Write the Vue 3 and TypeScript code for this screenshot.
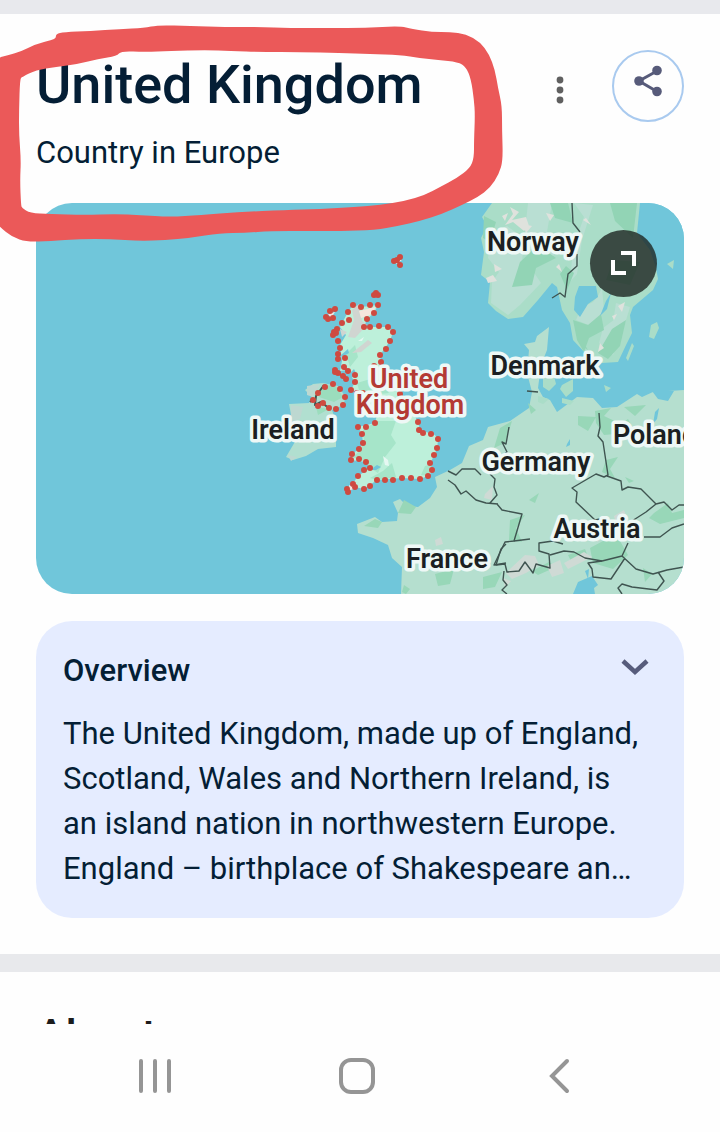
<script setup lang="ts">
import { ref } from 'vue'

type Point = [number, number]

interface Label {
  text: string
  x: number
  y: number
  accent?: boolean
}

const open = ref(false)

const labels: Label[] = [
  { text: 'Norway', x: 533, y: 251 },
  { text: 'Denmark', x: 545, y: 375 },
  { text: 'Ireland', x: 293, y: 439 },
  { text: 'Germany', x: 536, y: 471 },
  { text: 'Poland', x: 655, y: 444 },
  { text: 'Austria', x: 597, y: 538 },
  { text: 'France', x: 447, y: 568 },
  { text: 'United', x: 409, y: 388, accent: true },
  { text: 'Kingdom', x: 410, y: 414, accent: true },
]

const borderDots: Point[] = [
  [348, 312], [353, 305], [361, 307], [370, 305], [378, 305], [374, 313], [367, 319],
  [364, 327], [370, 327], [379, 326], [388, 327], [393, 332], [390, 341], [386, 349],
  [380, 355], [381, 362], [374, 366], [400, 394], [418, 422], [419, 430], [423, 433],
  [431, 434], [438, 439], [437, 448], [434, 455], [430, 463], [432, 470], [428, 476],
  [420, 479], [411, 478], [402, 478], [393, 480], [385, 480], [377, 480], [370, 486],
  [364, 489], [355, 487], [348, 492], [347, 489], [353, 484], [358, 476], [364, 470],
  [370, 468], [366, 462], [359, 459], [351, 460], [352, 454], [359, 449], [363, 443],
  [362, 434], [358, 427], [366, 427], [375, 423], [363, 393], [357, 393], [351, 390],
  [355, 382], [355, 375], [348, 371], [344, 367], [345, 358], [338, 359], [338, 354],
  [340, 348], [338, 341], [336, 333], [334, 332], [337, 329], [333, 335], [342, 323],
  [349, 320], [335, 309], [330, 311], [328, 319], [326, 317], [333, 318], [335, 370],
  [338, 373], [343, 376], [346, 379], [335, 372], [325, 387], [333, 384], [340, 389],
  [345, 397], [343, 405], [336, 409], [329, 408], [323, 403], [318, 406], [313, 400],
  [318, 393], [374, 295], [378, 295], [376, 293], [400, 257], [394, 261], [400, 265],
  [397, 260],
]

const markerOuter: Point[] = [
  [-6, 59], [8, 55], [20, 52], [36, 44], [52, 40], [56, 38], [56, 34], [64, 32], [90, 31],
  [120, 29], [144, 28], [158, 25], [190, 26], [225, 27], [258, 27], [290, 28], [330, 28],
  [365, 28], [400, 26], [412, 29], [432, 32], [450, 32], [466, 34], [480, 42], [489, 54],
  [495, 70], [498, 88], [502, 106], [502, 130], [503, 160], [499, 174], [490, 188],
  [478, 197], [462, 205], [442, 214], [420, 221], [398, 226], [375, 230], [340, 231],
  [310, 231], [270, 231], [245, 233], [220, 233], [190, 238], [165, 240], [140, 241],
  [110, 239], [80, 239], [50, 241], [27, 242], [12, 237], [0, 227], [-8, 218],
]

const markerInner: Point[] = [
  [20, 79], [22, 77], [36, 70], [56, 67], [78, 64], [98, 59], [117, 56], [121, 51],
  [145, 52], [170, 51], [206, 50], [230, 51], [262, 52], [300, 52], [340, 53], [370, 54],
  [400, 55], [420, 58], [438, 60], [458, 62], [466, 67], [471, 79], [474, 100], [475, 115],
  [474, 140], [474, 158], [470, 168], [457, 178], [440, 187], [425, 195], [405, 201],
  [380, 205], [355, 207], [320, 209], [285, 210], [240, 212], [200, 215], [170, 217],
  [140, 215], [115, 214], [85, 215], [50, 214], [30, 213], [22, 208], [21, 205], [20, 180],
  [21, 160], [19, 135], [19, 110],
]

/** Closed curve through the midpoints of a list of points. */
function smooth(points: Point[]): string {
  const mid = (a: Point, b: Point) => `${(a[0] + b[0]) / 2} ${(a[1] + b[1]) / 2}`
  const last = points[points.length - 1]
  const curves = points.map((point, i) => {
    const next = points[(i + 1) % points.length]
    return `Q${point[0]} ${point[1]} ${mid(point, next)}`
  })
  return `M${mid(last, points[0])}${curves.join('')}Z`
}

const markerPath = smooth(markerOuter) + smooth(markerInner)
const dotPath = borderDots.map(([x, y]) => `M${x} ${y}h0`).join('')
</script>

<template>
  <div class="screen">
    <main class="content">
      <section class="panel">
        <header class="heading">
          <div class="names">
            <h1>United Kingdom</h1>
            <p>Country in Europe</p>
          </div>
          <button class="more" type="button" aria-label="More options">
            <svg width="8" height="28" viewBox="0 0 8 28" fill="#606060">
              <circle cx="4" cy="4" r="3.4" />
              <circle cx="4" cy="14" r="3.4" />
              <circle cx="4" cy="24" r="3.4" />
            </svg>
          </button>
          <button class="share" type="button" aria-label="Share">
            <svg width="30" height="32" viewBox="0 0 30 32">
              <path d="M24 6 6 16l18 10.500" fill="none" stroke="#575b7a" stroke-width="3" />
              <g fill="#575b7a">
                <circle cx="24" cy="5.500" r="4.800" />
                <circle cx="6" cy="16" r="4.800" />
                <circle cx="24" cy="26.500" r="4.800" />
              </g>
            </svg>
          </button>
        </header>

        <div class="map">
          <svg class="chart" viewBox="36 203 648 391" role="img" aria-label="Map of north-western Europe">
            <rect x="36" y="203" width="648" height="391" fill="#70c6da" />

            <!-- Norway and Sweden -->
            <path
              fill="#aaddc8"
              d="M492 203 482 217 487 226 481 238 484 252 481 275 490 282 488 303 496 311 508 319 523 317 538 300 552 283 557 287 562 310 570 323 573 340 587 355 602 363 618 362 627 343 632 333 630 315 633 307 653 290 658 279 656 268 650 250 637 233 640 203Z"
            />
            <g fill="#b9dfd3">
              <path d="M492 232 507 226 525 239 522 260 536 248 548 253 533 271 541 283 520 305 508 315 491 303 492 282 499 272 488 258ZM528 203H552L547 232 554 255 540 262 524 240ZM574 203 584 217 573 248 570 282 577 274 582 240 593 205Z" />
              <path d="M581 308 593 302 598 296 602 288 604 310 596 327 586 324 576 320ZM603 328 615 319 622 333 613 355 599 343ZM616 303 630 307 623 330 613 322Z" />
            </g>
            <g fill="#92d4b5">
              <path d="M520 262 538 245 556 258 536 268 532 285 512 287ZM484 216 496 222 490 242 483 238ZM550 203H568L573 223 555 218ZM610 203H637L633 238 615 221ZM566 266 574 273 567 290 560 274Z" />
              <path d="M573 320 588 325 601 314 604 330 589 338 584 352 577 340ZM612 329 626 320 620 346 608 359 598 353ZM578 334 588 350 580 344ZM613 260 640 262 630 285 606 280Z" />
            </g>
            <g fill="#dfe2dd">
              <path d="M510 207 519 212 512 220 526 217 529 226 524 231 513 222 505 225 513 214ZM486 278 493 275 497 281 488 283ZM494 264 502 269 495 272ZM546 213 554 215 550 221ZM523 224 532 226 526 233ZM559 264 562 272 556 267ZM502 216 508 213 505 221Z" />
              <path d="M618 306 625 302 622 312ZM612 316 617 314 614 320ZM600 343 604 348 598 352ZM586 218 591 225 583 220ZM584 303 588 298 587 306Z" />
            </g>
            <path fill="#70c6da" d="M579 286 596 286 598 297 588 304 580 317 574 310 575 297ZM606 301 611 293 607 309 600 316ZM641 203H684V290L661 270 651 248 638 233Z" />
            <path fill="#aaddc8" d="M667 264 674 260 673 269ZM651 325 657 322 659 328 654 339 649 337ZM626 358 632 343 634 346 628 361Z" />

            <!-- Denmark and continental Europe -->
            <path
              fill="#b5dfcf"
              d="M549 327 537 336 535 342 524 344 529 350 527 373 532 392 529 408 510 421 488 427 483 440 469 446 462 463 450 470 435 477 437 487 430 498 418 507 407 506 400 499 393 502 398 513 397 521 382 522 375 517 357 524 358 533 373 538 388 545 392 558 402 567 401 594H684V390L653 392 642 397 637 394 617 407 602 408 593 398 577 397 557 412 550 400 543 397 538 388 541 365 547 350Z"
            />
            <path fill="#aaddc8" d="M543 377 553 372 556 384 549 391 543 387ZM562 385 573 379 573 391 566 397 560 389ZM538 396 549 399 543 404 538 402ZM562 398 574 401 570 405 562 403ZM604 385 611 388 606 392Z" />
            <g fill="#98d7b8">
              <path d="M578 416 596 417 588 431 578 425ZM595 411 611 408 604 416 621 424 628 419 632 426 615 434 604 435 596 423ZM606 460 618 457 610 469 615 478 602 472ZM624 407 646 405 635 416ZM528 403 536 410 531 414ZM500 428 512 421 505 443 494 448ZM510 520 525 515 516 528 522 542 509 540Z" />
              <path d="M654 513 668 503 672 513 684 510V518L660 524 649 518ZM590 548 616 534 628 555 613 569 593 563ZM568 555 585 549 589 559 571 561ZM483 577 502 572 495 587 483 589ZM529 500 539 493 535 503ZM532 571 549 562 556 567 538 575ZM643 568 652 574 645 582ZM404 500 416 507 411 514 398 513ZM375 519 382 522 378 528 364 526ZM435 574 454 569 450 584 438 586ZM404 585 410 589 406 594 402 592ZM625 477 634 481 629 483Z" />
            </g>
            <g fill="#cfdad5">
              <path d="M511 568 525 555 535 556 539 565 526 573 512 579 506 573ZM547 566 560 560 564 573 552 577ZM564 563 584 552 592 557 568 569ZM485 494 493 486 492 500 484 498ZM614 516 624 510 627 518 615 520ZM595 537 604 538 597 542ZM435 540 441 537 443 544 436 546ZM503 578 511 581 505 588Z" />
            </g>
            <path fill="#70c6da" d="M573 594 578 582 592 576 598 585 594 588 595 594ZM652 391 674 391 668 401 658 399ZM655 412 659 408 657 419 653 424ZM567 444 570 439V445L566 447ZM585 571 589 569 588 579Z" />

            <!-- Ireland -->
            <path fill="#b1dfd0" d="M305 390 313 384 323 383 338 386 345 396 344 405 332 410 336 422 336 447 318 449 306 456 293 460 286 457 296 440 290 430 292 420 289 404 309 403 312 397Z" />
            <path fill="#bdd8d1" d="M307 386 320 384 313 397 307 395ZM291 405 303 407 300 419 291 422ZM288 455 297 457 291 461Z" />
            <path fill="#9bddbd" d="M323 386 335 385 343 397 334 402 319 397ZM316 407 329 409 318 415Z" />

            <!-- Great Britain -->
            <path
              fill="#bdf0da"
              d="M348 312 353 305 361 307 378 305 374 313 367 319 364 327H388L393 332 390 341 380 355 381 362 393 382 400 394 410 407 418 422 420 430 435 435 438 440 437 449 430 464 432 472 428 476 420 479 402 478 377 480 364 489 355 487 347 492 358 476 370 468 366 462 351 460 352 454 359 449 363 443 362 434 358 427 375 423 377 415 363 393 351 390 355 382 347 370 340 371 342 361 340 345 346 335 340 327Z"
            />
            <path fill="#a6e5c9" d="M363 430 377 421 396 421 391 435 396 443 385 457 378 473 370 468 366 462 352 457 360 451 364 442ZM370 478 383 471 392 463 396 477 378 480ZM346 354 355 345 358 357 350 367ZM357 383 377 377 389 393 372 395 359 390ZM425 466 432 464 429 476 421 475Z" />
            <path fill="#d0d5d1" d="M352 310 359 304 362 321 367 325 355 338 348 337 354 320ZM352 353 368 340 372 343 361 352ZM340 329 347 332 342 337Z" />
            <path fill="#f5e5dd" d="M359 311 376 307 370 315 361 318ZM349 485 355 488 349 491ZM395 259 402 260 396 264ZM328 314 335 312 331 318Z" />
            <path fill="#70c6da" d="M341 355 348 349 349 353 342 357ZM347 376 354 369 356 373 349 381ZM370 470 377 465 381 467 376 470Z" />
            <path fill="#e6f8f2" d="M383 456 388 460 389 466 385 465ZM358 341 364 337 362 341Z" />

            <!-- Land borders -->
            <g fill="none" stroke="#3f5450" stroke-width="1.400" stroke-linejoin="round">
              <path d="M572 203 573 223 580 232M577 254V266L568 274 565 297 560 293 552 298M527 391 538 392" />
              <path d="M509 427 506 444 502 442 507 452 502 456M448 471 456 475 462 469H475L481 475M448 480 455 485 461 494 466 491 476 500 486 503 498 504M490 474 495 479 494 487 497 495 490 503M497 504 502 510 522 514 514 541 505 542 494 565 506 563" />
              <path d="M599 413 600 427 598 436 603 442 608 475 604 477 596 474 572 488 577 492 576 502 595 520 600 519M607 476 621 481 622 490 628 487 641 489 651 499 656 504 664 502 672 510 679 505H684M656 504 646 512 632 521" />
              <path d="M644 537H660L672 528 684 524M514 541 530 539M506 544 501 549 496 565 505 564 507 572 519 571 525 562 533 573 536 564 550 568 549 554 539 551V543L553 541 563 544M550 555 564 551 574 552 585 558 602 561 622 556 628 543" />
              <path d="M622 556 636 569 653 574 667 570 684 567M625 558 615 573 611 579 593 577 592 569 588 563 602 561M658 572 664 581 657 590 632 587 622 584 618 588 622 594M504 571 503 580 507 585 502 590 507 594" />
              <path stroke-width="2" d="M324 385 316 396 315 405 321 402 330 409M313 399 310 402" />
            </g>

            <path :d="dotPath" class="dots" />

            <text
              v-for="label in labels"
              :key="label.text"
              :x="label.x"
              :y="label.y"
              class="label"
              :class="{ accent: label.accent }"
            >{{ label.text }}</text>
          </svg>
          <button class="expand" type="button" aria-label="Expand map">
            <svg width="25" height="25" viewBox="0 0 25 25" fill="none" stroke="#fff" stroke-width="4">
              <path d="M10 2h13v13M2 9v13h13" />
            </svg>
          </button>
        </div>

        <article class="card">
          <button
            class="toggle"
            type="button"
            aria-controls="overview-text"
            :aria-expanded="open"
            @click="open = !open"
          >
            <span>Overview</span>
            <svg width="28" height="18" viewBox="0 0 28 18" fill="none" stroke="#575c7c" stroke-width="4.500">
              <path d="m2 3 12 11L26 3" />
            </svg>
          </button>
          <p id="overview-text" :class="{ open }">
            The United Kingdom, made up of England, Scotland, Wales and Northern Ireland, is an island
            nation in northwestern Europe. England – birthplace of Shakespeare and The Beatles – is
            home to the capital, London.
          </p>
        </article>

        <svg class="marker" width="504" height="243" viewBox="0 0 504 243" aria-hidden="true">
          <path :d="markerPath" fill="#eb5959" fill-rule="evenodd" />
        </svg>
      </section>

      <section class="about">
        <h2>About</h2>
      </section>
    </main>

    <nav class="system" aria-label="System navigation">
      <button type="button" aria-label="Recent apps">
        <svg width="36" height="38" viewBox="0 0 36 38">
          <path d="M4 4v30M18 4v30M32 4v30" />
        </svg>
      </button>
      <button type="button" aria-label="Home">
        <svg width="38" height="38" viewBox="0 0 38 38">
          <rect x="3" y="3" width="32" height="32" rx="10" />
        </svg>
      </button>
      <button type="button" aria-label="Back">
        <svg width="22" height="38" viewBox="0 0 22 38">
          <path d="M19 4 4 19l15 15" />
        </svg>
      </button>
    </nav>
  </div>
</template>

<style>
body {
  margin: 0;
  background: #fefefe;
}
</style>

<style scoped>
.screen {
  display: flex;
  flex-direction: column;
  height: 100vh;
  background: #fefefe;
  color: #041e35;
  font-family: Roboto, "Liberation Sans", sans-serif;
}

button {
  display: flex;
  align-items: center;
  justify-content: center;
  margin: 0;
  padding: 0;
  border: 0;
  background: none;
  color: inherit;
  font: inherit;
  cursor: pointer;
}

h1,
h2,
p {
  margin: 0;
}

.content {
  flex: 1;
  min-height: 0;
  overflow: hidden;
}

.panel {
  position: relative;
  padding: 36px;
  border-top: 14px solid #e8e9ed;
  border-bottom: 18px solid #e8e9ec;
}

.heading {
  display: flex;
  align-items: flex-start;
  height: 153px;
}

.names {
  flex: 1;
}

h1 {
  font-size: 54px;
  font-weight: 500;
  line-height: 70px;
}

.names p {
  margin-top: 10px;
  font-size: 31px;
  line-height: 45px;
}

.more {
  width: 40px;
  height: 80px;
}

.share {
  box-sizing: border-box;
  width: 72px;
  height: 72px;
  margin-left: 32px;
  padding-bottom: 10px;
  border: 2px solid #a9caef;
  border-radius: 50%;
}

.map {
  position: relative;
  overflow: hidden;
  border-radius: 36px;
}

.chart {
  display: block;
  width: 100%;
}

.label {
  fill: #1b1f22;
  stroke: #eef8f6;
  stroke-width: 7px;
  stroke-linejoin: round;
  paint-order: stroke;
  font-size: 27px;
  font-weight: 600;
  text-anchor: middle;
}

.accent {
  fill: #b43a34;
}

.dots {
  fill: none;
  stroke: #cf4a40;
  stroke-width: 6px;
  stroke-linecap: round;
}

.expand {
  position: absolute;
  top: 27px;
  right: 27px;
  width: 67px;
  height: 67px;
  border-radius: 50%;
  background: rgba(30, 38, 34, 0.8);
}

.card {
  margin-top: 27px;
  padding: 27px;
  border-radius: 36px;
  background: #e5ecff;
}

.toggle {
  justify-content: space-between;
  width: 100%;
  padding-right: 8px;
  font-size: 31px;
  font-weight: 500;
  line-height: 45px;
}

.toggle svg {
  margin-bottom: 8px;
}

.card p {
  display: -webkit-box;
  margin-top: 18px;
  margin-right: 10px;
  overflow: hidden;
  font-size: 31px;
  line-height: 45px;
  -webkit-box-orient: vertical;
  -webkit-line-clamp: 4;
}

.card p.open {
  -webkit-line-clamp: none;
}

.marker {
  position: absolute;
  top: -14px;
  left: 0;
  pointer-events: none;
}

.about {
  padding: 36px;
}

h2 {
  color: #1c1c1c;
  font-size: 45px;
  font-weight: 500;
  line-height: 56px;
}

.system {
  display: grid;
  grid-template-columns: repeat(3, 1fr);
  height: 104px;
  padding: 0 60px 4px 54px;
}

.system svg {
  fill: none;
  stroke: #959595;
  stroke-width: 4px;
  stroke-linecap: round;
}
</style>
